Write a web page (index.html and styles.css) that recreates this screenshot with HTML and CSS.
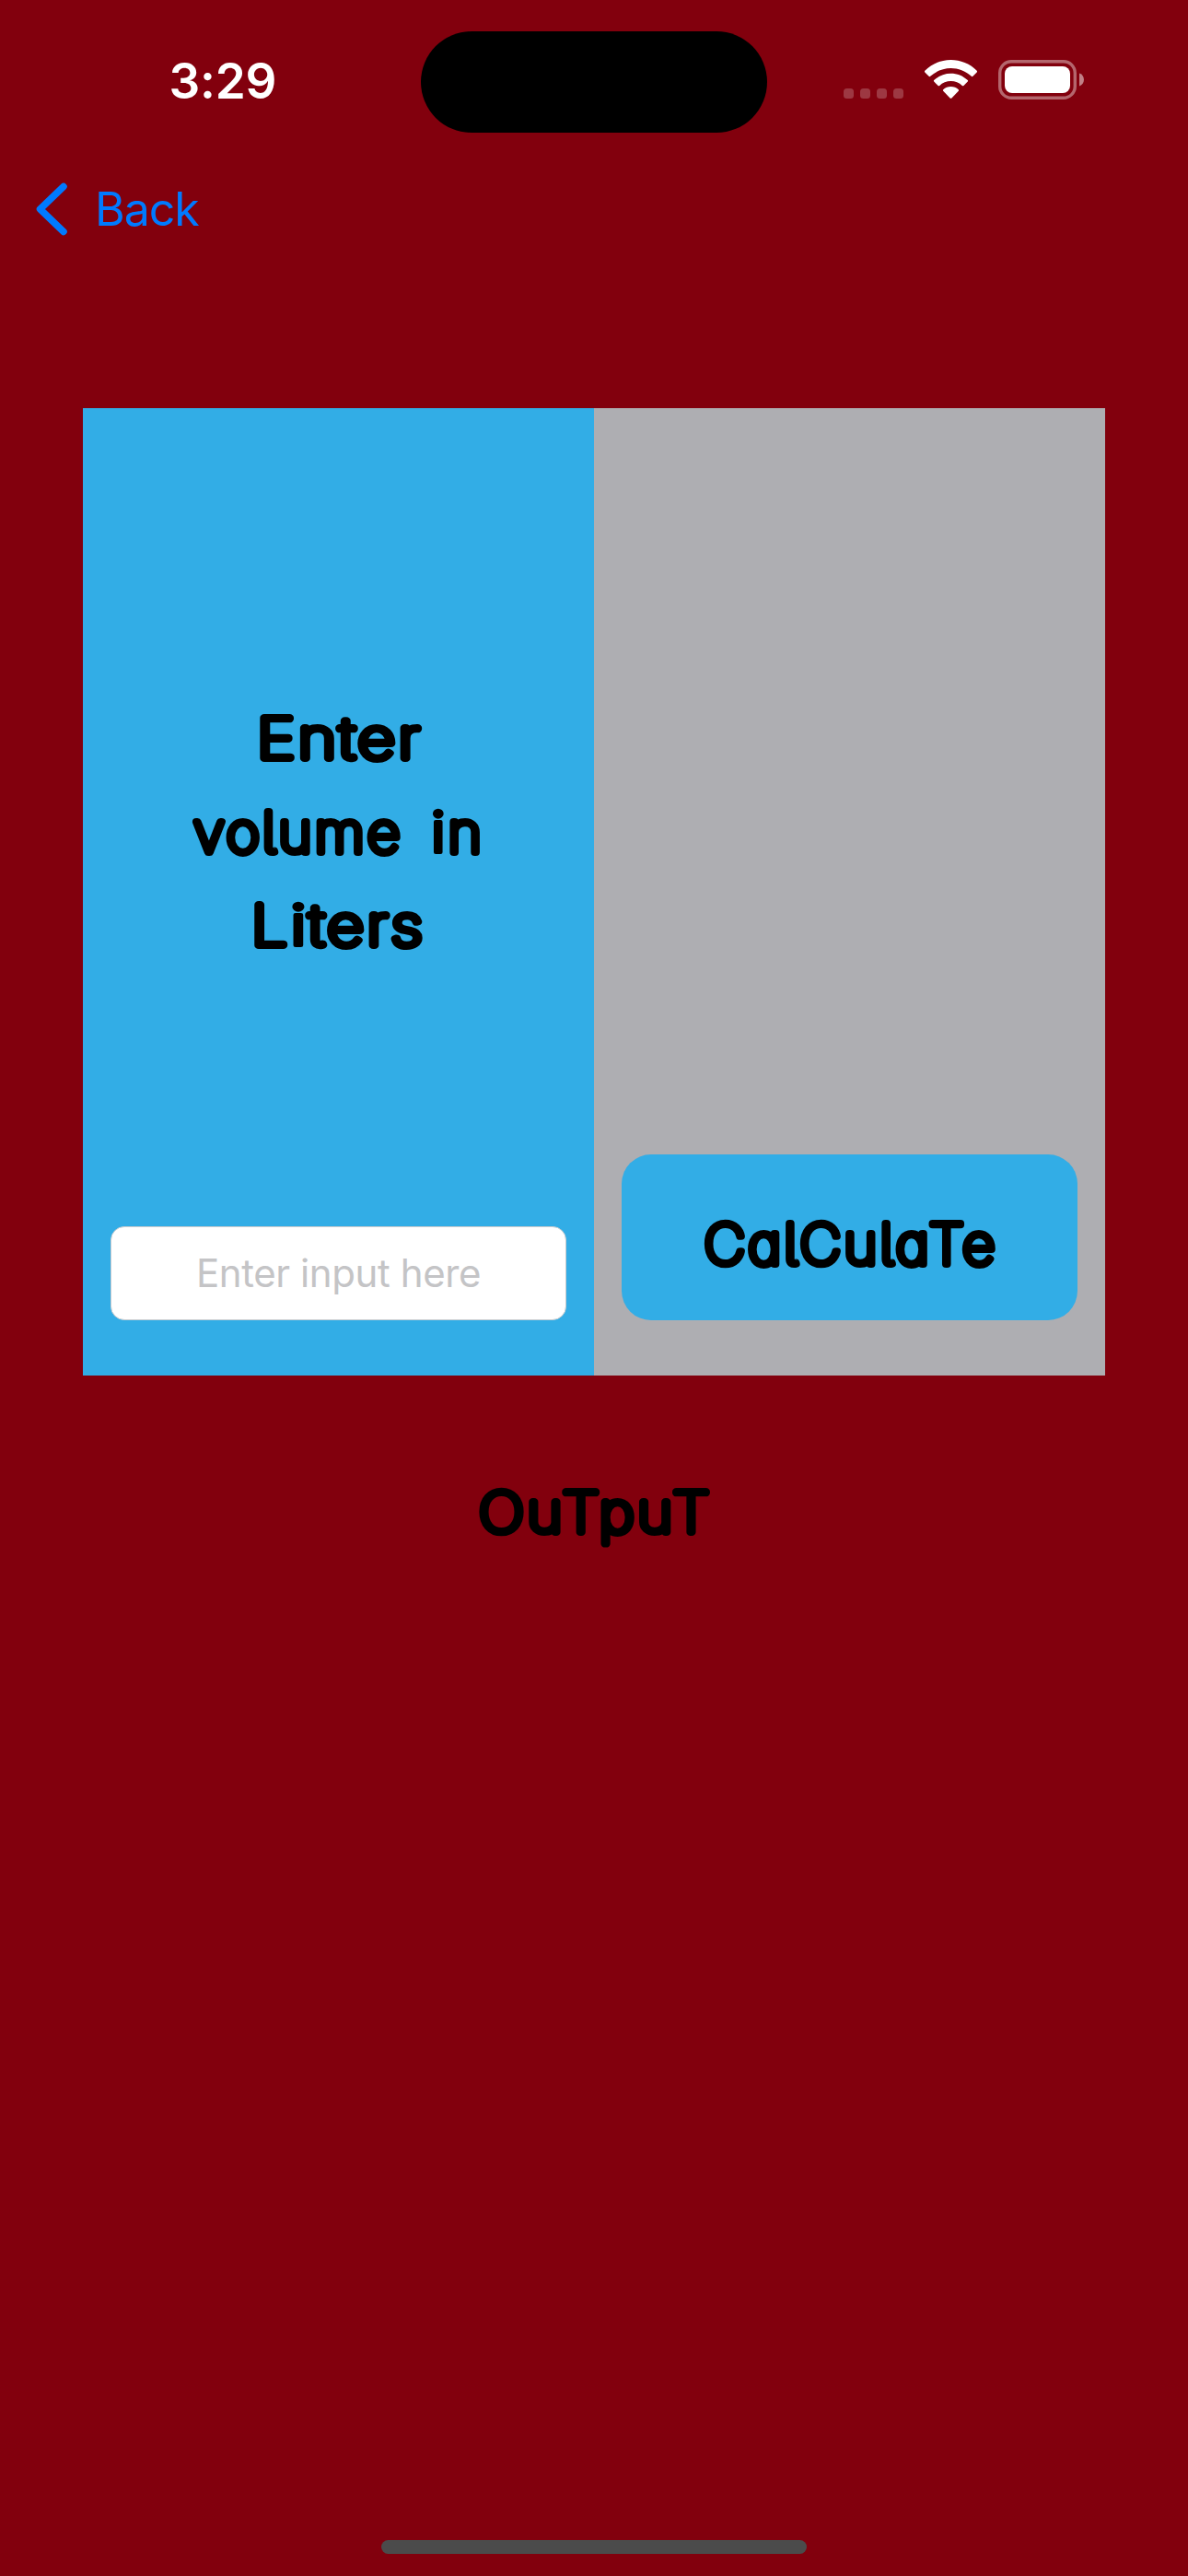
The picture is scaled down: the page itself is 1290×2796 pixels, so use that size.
FILE: index.html
```html
<!DOCTYPE html>
<html lang="en">
<head>
<meta charset="utf-8">
<title>Volume converter</title>
<link rel="stylesheet" href="styles.css">
</head>
<body>
<div class="screen">
  <header class="status">
    <div class="time">3:29</div>
    <div class="island"></div>
    <svg class="indicators" width="262" height="44" viewBox="916 65 262 44">
      <g fill="#fff" fill-opacity=".22">
        <rect x="916" y="96" width="11" height="11" rx="3.5"/>
        <rect x="934" y="96" width="11" height="11" rx="3.5"/>
        <rect x="952" y="96" width="11" height="11" rx="3.5"/>
        <rect x="970" y="96" width="11" height="11" rx="3.5"/>
      </g>
      <g fill="#fff">
        <path d="M1004.3 76.8Q1003.6 77.6 1004.3 78.4L1008.6 82.8Q1009.4 83.6 1010.2 82.8C1023 71 1042 71 1054.8 82.8Q1055.6 83.6 1056.4 82.8L1060.7 78.4Q1061.4 77.6 1060.7 76.8C1045.5 61.1 1019.5 61.1 1004.3 76.8Z"/>
        <path d="M1014.2 87Q1013.5 87.8 1014.2 88.5L1018.6 93Q1019.4 93.7 1020.2 93C1026.5 86.2 1038.5 86.2 1044.8 93Q1045.6 93.7 1046.4 93L1050.8 88.5Q1051.5 87.8 1050.8 87C1040.5 77.2 1024.5 77.2 1014.2 87Z"/>
        <path d="M1024.2 97.2Q1023.5 98 1024.2 98.8L1031.6 106.4Q1032.5 107.2 1033.4 106.4L1040.8 98.8Q1041.5 98 1040.8 97.2C1036.5 93 1028.5 93 1024.2 97.2Z"/>
      </g>
      <rect x="1085.7" y="66.7" width="81.6" height="39.6" rx="12.5" fill="none" stroke="#fff" stroke-opacity=".4" stroke-width="3.4"/>
      <rect x="1091" y="72" width="71" height="29" rx="8" fill="#fff"/>
      <path d="M1172 79.6C1178.6 81.4 1178.6 91.6 1172 93.4Z" fill="#fff" fill-opacity=".5"/>
    </svg>
  </header>

  <nav class="nav">
    <a class="back">
      <svg width="34" height="58" viewBox="0 0 34 58"><path d="M30 4.5L4.5 29L30 53.5" fill="none" stroke="#007aff" stroke-width="7.5" stroke-linecap="round" stroke-linejoin="round"/></svg>
      <span class="back-label">Back</span>
    </a>
  </nav>

  <main class="content">
    <div class="panels">
      <section class="panel input-panel">
        <svg class="prompt" width="495" height="320" viewBox="120 750 495 320">
          <text class="chalk" x="369" y="823" textLength="180" lengthAdjust="spacingAndGlyphs">Enter</text>
          <text class="chalk prompt-wide" x="368" y="925" textLength="316" lengthAdjust="spacingAndGlyphs">volume <tspan class="dotted">i</tspan>n</text>
          <text class="chalk" x="367.5" y="1026" textLength="189" lengthAdjust="spacingAndGlyphs">L<tspan class="dotted">i</tspan>ters</text>
        </svg>
        <div class="field"><span class="placeholder">Enter input here</span></div>
      </section>
      <section class="panel action-panel">
        <div class="button">
          <svg width="495" height="180" viewBox="675 1253 495 180"><text class="chalk" x="924" y="1371.5" textLength="319" lengthAdjust="spacingAndGlyphs">CalCulaTe</text></svg>
        </div>
      </section>
    </div>
    <svg class="output" width="1110" height="220" viewBox="90 1493 1110 220"><text class="chalk" x="647" y="1663" textLength="254" lengthAdjust="spacingAndGlyphs">OuTpuT</text></svg>
  </main>

  <footer class="home"><div class="home-bar"></div></footer>
</div>
</body>
</html>
```

FILE: styles.css
```css
* { box-sizing: border-box; }
body { margin: 0; background: #82000d; }
.screen {
  width: 1290px;
  height: 2796px;
  display: flex;
  flex-direction: column;
  background: #82000d;
  font-family: Inter, "Liberation Sans", sans-serif;
  overflow: hidden;
}
.status {
  height: 177px;
  flex: none;
  display: grid;
  grid-template-columns: 457px 376px 457px;
  align-items: start;
}
.time {
  padding: 56px 0 0 183.5px;
  font-size: 53px;
  line-height: 64px;
  font-weight: 600;
  letter-spacing: -0.2px;
  color: #fff;
  white-space: nowrap;
}
.island { height: 110px; margin-top: 34px; border-radius: 55px; background: #000; }
.indicators { margin: 65px 0 0 83px; display: block; }
.nav { height: 266px; flex: none; padding: 21px 0 0 39px; }
.back { display: flex; width: max-content; height: 58px; align-items: center; gap: 30px; color: #007aff; }
.back-label { font-size: 50px; line-height: 58px; letter-spacing: -1px; }
.content { flex: 1; padding: 0 90px; }
.panels { display: grid; grid-template-columns: 1fr 1fr; height: 1050px; }
.panel { display: flex; flex-direction: column; padding: 0 30px 60px; }
.input-panel { background: #32ade6; padding-top: 307px; justify-content: space-between; }
.action-panel { background: #aeaeb2; justify-content: flex-end; }

/* Thin letters with a thick round stroke give the marker lettering */
.chalk {
  font-family: Inter, "Liberation Sans", sans-serif;
  font-weight: 100;
  font-size: 60px;
  letter-spacing: 3px;
  font-feature-settings: "cv11", "cv05";
  text-anchor: middle;
  fill: #000;
  stroke: #000;
  stroke-width: 8px;
  stroke-linejoin: round;
  stroke-linecap: round;
}
.dotted { font-weight: 400; stroke-width: 4px; }
.prompt-wide { word-spacing: 10px; }
.prompt, .button svg, .output { display: block; }
.field {
  height: 102px;
  border: 1px solid #c9cccf;
  border-radius: 15px;
  background: #fff;
  display: flex;
  align-items: center;
  justify-content: center;
}
.placeholder { font-size: 42px; line-height: 50px; letter-spacing: -0.4px; color: #c4c4c6; }
.button { height: 180px; border-radius: 32px; background: #32ade6; overflow: hidden; }
.home { height: 39px; flex: none; display: flex; justify-content: center; }
.home-bar { width: 462px; height: 15px; border-radius: 8px; background: #4b4b4b; }
```
